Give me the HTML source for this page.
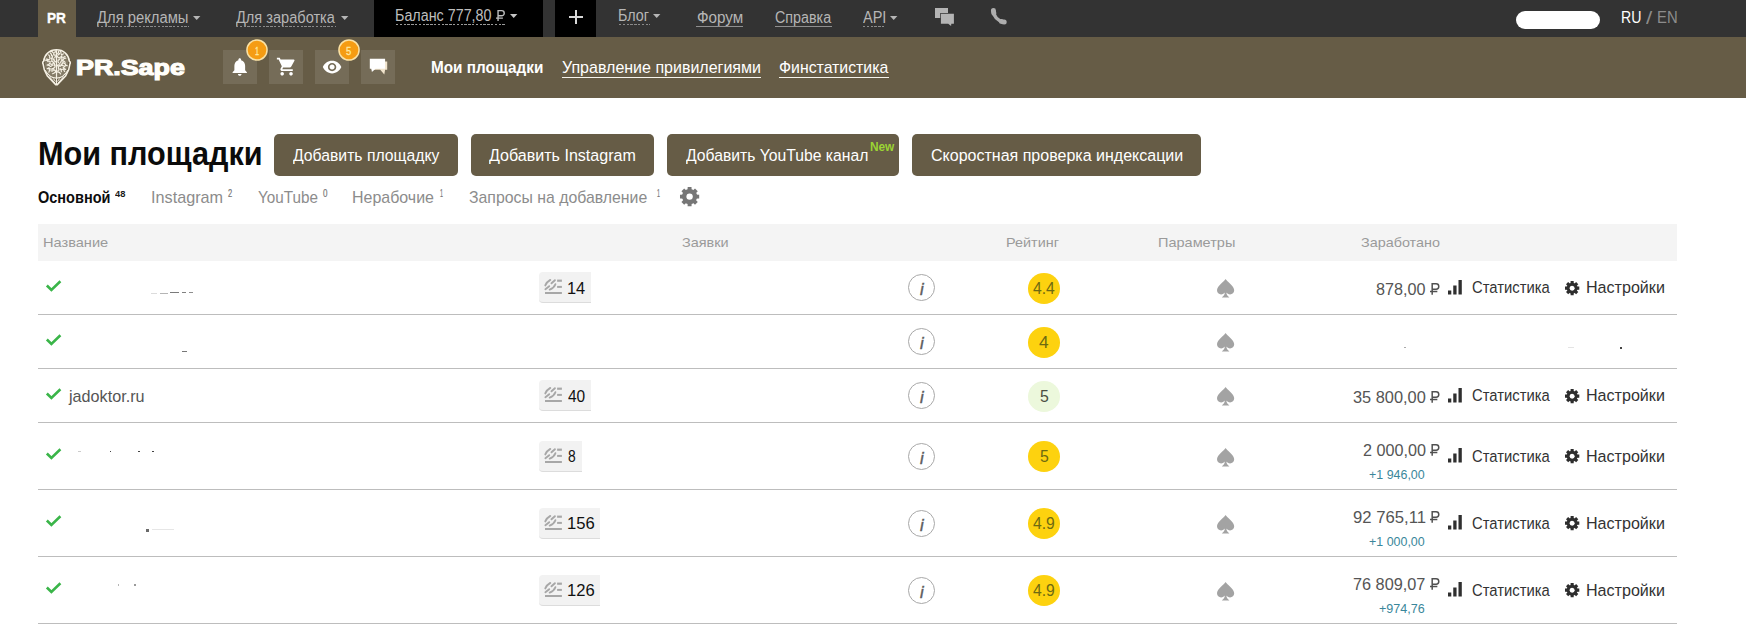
<!DOCTYPE html>
<html lang="ru"><head><meta charset="utf-8"><title>PR.Sape — Мои площадки</title>
<style>
html,body{margin:0;padding:0;background:#fff}
body{width:1746px;height:626px;position:relative;overflow:hidden;font-family:'Liberation Sans',sans-serif;}
#p{position:absolute;left:0;top:0;width:1746px;height:626px;overflow:hidden;background:#fff}
#p header,#p nav,#p main,#p section{display:contents}
#p div,#p svg,#p span{position:absolute;display:block;box-sizing:content-box}
#p svg{overflow:visible}
.t{white-space:nowrap;transform-origin:0 0;font-family:'Liberation Sans',sans-serif}
</style></head><body><div id="p">
<header class="topbar">
<div style="left:0px;top:0px;width:1746px;height:37px;background:#333333"></div>
<div style="left:38px;top:0px;width:38px;height:37px;background:#665c46"></div>
<span class="t" style="left:46.97px;top:6.90px;font-size:15.4px;line-height:21px;color:#fff;transform:scaleX(0.8877);font-weight:700;-webkit-text-stroke:0.35px #fff;">PR</span>
<span class="t" style="left:97.20px;top:6.95px;font-size:15.8px;line-height:21px;color:#b6b6b6;transform:scaleX(0.9355);">Для рекламы</span>
<div style="left:97px;top:26px;width:92px;height:1px;background:repeating-linear-gradient(90deg,#8a8a8a 0,#8a8a8a 2.4px,transparent 2.4px,transparent 3.8px)"></div>
<svg style="left:193.1px;top:16px;" width="7.4" height="4" viewBox="0 0 7.4 4"><path d="M0 0h7.4L3.7 4z" fill="#b6b6b6"/></svg>
<span class="t" style="left:236.00px;top:6.95px;font-size:15.8px;line-height:21px;color:#b6b6b6;transform:scaleX(0.9224);">Для заработка</span>
<div style="left:236px;top:26px;width:99.5px;height:1px;background:repeating-linear-gradient(90deg,#8a8a8a 0,#8a8a8a 2.4px,transparent 2.4px,transparent 3.8px)"></div>
<svg style="left:340.7px;top:16px;" width="7.4" height="4" viewBox="0 0 7.4 4"><path d="M0 0h7.4L3.7 4z" fill="#b6b6b6"/></svg>
<div style="left:374px;top:0px;width:169px;height:37px;background:#000"></div>
<span class="t" style="left:395.49px;top:4.90px;font-size:15.8px;line-height:21px;color:#bebebe;transform:scaleX(0.9064);">Баланс 777,80</span>
<div style="left:395.5px;top:24px;width:109.5px;height:1px;background:repeating-linear-gradient(90deg,#999 0,#999 2.4px,transparent 2.4px,transparent 3.8px)"></div>
<svg style="left:510px;top:13.9px;" width="7.4" height="4" viewBox="0 0 7.4 4"><path d="M0 0h7.4L3.7 4z" fill="#c4c4c4"/></svg>
<svg style="left:496.2px;top:9.9px;" width="9.14" height="11.0" viewBox="0 0 9.8 11.8"><path d="M2.200 11.800V.7h3.900a2.750 2.750 0 0 1 0 5.500H2.200M0 8.700h7.400" fill="none" stroke="#bebebe" stroke-width="1.502"/></svg>
<div style="left:555px;top:0px;width:41px;height:37px;background:#000"></div>
<div style="left:569.2px;top:16.2px;width:13.8px;height:2px;background:#d8d8d8"></div>
<div style="left:575.2px;top:10.3px;width:2px;height:13.9px;background:#d8d8d8"></div>
<span class="t" style="left:618.19px;top:4.90px;font-size:15.8px;line-height:21px;color:#b6b6b6;transform:scaleX(0.9050);">Блог</span>
<div style="left:618.5px;top:24px;width:31.0px;height:1px;background:repeating-linear-gradient(90deg,#8a8a8a 0,#8a8a8a 2.4px,transparent 2.4px,transparent 3.8px)"></div>
<svg style="left:653.4px;top:14.2px;" width="7.4" height="4" viewBox="0 0 7.4 4"><path d="M0 0h7.4L3.7 4z" fill="#b6b6b6"/></svg>
<span class="t" style="left:697.00px;top:6.80px;font-size:15.8px;line-height:21px;color:#b6b6b6;transform:scaleX(0.9634);">Форум</span>
<div style="left:696.3px;top:26px;width:46.80000000000007px;height:1px;background:#8f8f8f"></div>
<span class="t" style="left:775.20px;top:6.85px;font-size:15.8px;line-height:21px;color:#b6b6b6;transform:scaleX(0.9054);">Справка</span>
<div style="left:775px;top:26px;width:57px;height:1px;background:#8f8f8f"></div>
<span class="t" style="left:863.40px;top:6.85px;font-size:15.8px;line-height:21px;color:#b6b6b6;transform:scaleX(0.9180);">API</span>
<div style="left:863px;top:26px;width:22.799999999999955px;height:1px;background:repeating-linear-gradient(90deg,#8a8a8a 0,#8a8a8a 2.4px,transparent 2.4px,transparent 3.8px)"></div>
<svg style="left:890px;top:16.2px;" width="7.4" height="4" viewBox="0 0 7.4 4"><path d="M0 0h7.4L3.7 4z" fill="#b6b6b6"/></svg>
<svg style="left:935px;top:8px;" width="19" height="18.5" viewBox="0 0 19 18.5"><rect x="0" y="0" width="13" height="10" fill="#b4b4b4"/><path d="M5.2 5h14.3v11.5h-2.6l-.4 2.6-3.2-2.6H5.2z" fill="#333"/><path d="M5.9 5.7h13v10h-2.6l-.2 2.4-2.9-2.4H5.9z" fill="#b4b4b4"/></svg>
<svg style="left:990px;top:8px;" width="18" height="18" viewBox="0 0 18 18"><g fill="none" stroke="#adadad" stroke-linecap="round"><path d="M3.500 2.600Q4.200 12.300 14 14" stroke-width="3.300"/><path d="M3.450 2.500Q3.500 4 3.800 5.200" stroke-width="5"/><path d="M11.600 13.500Q13 14 14.200 14" stroke-width="5"/></g></svg>
<div style="left:1516.2px;top:11.2px;width:83.6px;height:17.5px;background:#fff;border-radius:9px"></div>
<span class="t" style="left:1621.31px;top:6.60px;font-size:15.9px;line-height:21px;color:#fff;transform:scaleX(0.8894);">RU</span>
<span class="t" style="left:1645.80px;top:5.60px;font-size:18.2px;line-height:24px;color:#8c8c8c;transform:scaleX(1.2333);">/</span>
<span class="t" style="left:1656.57px;top:6.60px;font-size:15.9px;line-height:21px;color:#8c8c8c;transform:scaleX(0.9321);">EN</span>
</header>
<nav class="brandbar">
<div style="left:0px;top:37px;width:1746px;height:60.5px;background:#665c46"></div>
<svg style="left:42px;top:48.5px;" width="29" height="36.5" viewBox="0 0 29 36.5"><g fill="none" stroke="#f6f1e4" stroke-linecap="round" stroke-linejoin="round"><path stroke-width="1.55" d="M14.5 .8C21.6 .8 26.7 5.7 27.3 12.200c1 .3 1.300 1.700.6 2.800-.3 4.600-2 8.500-4.300 12L15.300 35.600h-1.600L5.400 27C3.100 23.500 1.400 19.600 1.100 15c-.7-1.100-.4-2.500.6-2.800C2.300 5.700 7.400.8 14.500.8z"/><path stroke-width="1.2" d="M14.500 1.500v27.500M3.200 21.500c3.200 5.200 7 7.600 11.300 7.600s8.100-2.400 11.300-7.600"/><path stroke-width="1" d="M14.500 29.500v5.500M7.500 27.800l5.500 6.200M21.500 27.800l-5.500 6.200M11.500 29.800l1.800 2.400M17.500 29.800l-1.800 2.400"/><path stroke-width="1.2" d="M12.84 3.72Q13.67 2.79 13.17 1.65M10.84 3.34Q10.00 2.14 8.54 2.15M15.64 4.72Q16.73 3.63 16.64 2.09M18.93 4.26Q19.25 2.75 18.01 1.84M12.01 6.12Q11.37 5.05 11.77 3.87M9.61 6.76Q9.84 4.96 8.35 3.94M16.16 5.86Q17.28 5.44 17.54 4.26M19.28 5.39Q20.47 5.79 21.40 4.93M12.72 8.81Q13.91 7.41 13.09 5.76M10.16 8.74Q10.70 7.73 10.28 6.65M7.63 8.67Q8.30 6.90 6.67 5.93M16.86 8.89Q15.52 8.26 15.21 6.82M17.82 8.30Q19.47 8.32 19.83 6.71M19.98 8.02Q21.74 8.96 23.08 7.47M12.42 11.13Q11.29 10.54 10.99 9.30M10.08 11.05Q9.90 9.78 8.87 9.02M7.92 9.84Q6.36 11.20 4.72 9.94M16.24 11.44Q17.80 11.03 18.20 9.47M19.77 10.80Q20.22 9.60 19.55 8.52M20.93 11.02Q21.71 9.17 23.72 9.20M13.76 12.91Q12.36 12.62 11.90 11.26M11.31 13.53Q10.65 12.35 9.32 12.13M8.25 13.09Q7.65 11.74 6.21 12.06M6.10 12.69Q5.13 10.78 3.04 11.26M16.40 13.65Q15.48 12.30 16.29 10.89M18.80 13.70Q18.63 12.36 19.73 11.56M20.34 11.94Q22.16 11.74 23.15 13.27M12.30 16.29Q13.03 14.23 11.15 13.11M11.01 14.68Q9.71 15.84 8.34 14.77M7.65 14.16Q7.15 15.97 5.28 15.88M15.62 16.02Q17.65 15.99 17.99 14.00M18.96 15.70Q20.59 14.83 21.07 13.05M21.74 14.05Q23.37 14.44 23.87 16.04M13.06 15.82Q13.43 17.47 12.38 18.79M10.90 16.25Q9.50 16.22 8.92 17.50M8.14 17.25Q6.99 15.63 5.07 16.16M15.00 17.08Q16.08 15.73 17.65 16.46M17.98 17.45Q18.94 16.19 20.52 16.12M21.01 16.49Q22.29 16.60 22.70 17.81M23.21 16.75Q24.22 15.93 25.25 16.73M12.84 18.28Q11.22 18.90 11.02 20.63M10.89 19.62Q9.12 20.80 7.60 19.32M7.08 18.64Q6.38 19.60 5.20 19.58M16.63 17.47Q15.75 19.29 17.14 20.75M18.19 19.67Q19.72 20.84 21.50 20.07M21.11 18.03Q21.66 19.93 23.58 20.37M12.20 20.87Q13.69 21.51 13.82 23.13M11.16 21.54Q10.15 22.48 9.01 21.70M7.20 20.05Q7.87 21.67 6.90 23.13M16.93 20.84Q15.59 21.56 15.69 23.08M18.47 20.18Q19.46 21.20 19.35 22.62M22.01 20.43Q21.57 21.69 22.68 22.42M12.97 23.40Q12.00 24.63 10.44 24.75M15.98 22.92Q17.97 23.04 18.59 24.95"/></g><ellipse cx="14.500" cy="14.800" rx="11.700" ry="13.300" fill="#f6f1e4" opacity=".22"/></svg>
<span class="t" style="left:76.08px;top:53.40px;font-size:21.9px;line-height:29px;color:#fffefa;transform:scaleX(1.2254);font-weight:700;-webkit-text-stroke:1.15px #fffefa;">PR.Sape</span>
<div style="left:223px;top:50px;width:34px;height:34px;background:rgba(255,255,255,.1)"></div>
<svg style="left:229.25px;top:56.25px;" width="21.5" height="21.5" viewBox="0 0 24 24"><path d="M12 22c1.100 0 2-.9 2-2h-4c0 1.100.89 2 2 2zm6-6v-5c0-3.070-1.640-5.640-4.500-6.320V4c0-.83-.67-1.500-1.500-1.500s-1.500.67-1.500 1.500v.68C7.630 5.360 6 7.920 6 11v5l-2 2v1h16v-1l-2-2z" fill="#fff"/></svg>
<div style="left:269px;top:50px;width:34px;height:34px;background:rgba(255,255,255,.1)"></div>
<svg style="left:276.09999999999997px;top:56.199999999999996px;" width="21.2" height="21.2" viewBox="0 0 24 24"><path d="M7 18c-1.100 0-1.990.9-1.990 2S5.900 22 7 22s2-.9 2-2-.9-2-2-2zM1 2v2h2l3.600 7.590-1.350 2.450c-.16.28-.25.61-.25.96 0 1.100.9 2 2 2h12v-2H7.420c-.14 0-.25-.11-.25-.25l.03-.12.9-1.630h7.450c.75 0 1.410-.41 1.750-1.030l3.580-6.490c.08-.14.12-.31.12-.48 0-.55-.45-1-1-1H5.210l-.94-2H1zm16 16c-1.100 0-1.990.9-1.990 2s.89 2 1.990 2 2-.9 2-2-.9-2-2-2z" fill="#fff"/></svg>
<div style="left:315px;top:50px;width:34px;height:34px;background:rgba(255,255,255,.1)"></div>
<svg style="left:321.9px;top:56.49999999999999px;" width="20.2" height="20.2" viewBox="0 0 24 24"><path d="M12 4.500C7 4.500 2.730 7.610 1 12c1.730 4.390 6 7.500 11 7.500s9.270-3.110 11-7.500c-1.730-4.390-6-7.500-11-7.500zM12 17c-2.760 0-5-2.240-5-5s2.240-5 5-5 5 2.240 5 5-2.240 5-5 5zm0-8c-1.660 0-3 1.340-3 3s1.340 3 3 3 3-1.340 3-3-1.340-3-3-3z" fill="#fff"/></svg>
<div style="left:361px;top:50px;width:34px;height:34px;background:rgba(255,255,255,.1)"></div>
<svg style="left:369px;top:58px;" width="19" height="17" viewBox="0 0 19 17"><path d="M2.600 3.400h15.600v8.300h-2.100l-.8 4.900-4.100-4.900H2.600z" fill="#f1e4cc"/><path d="M.8 .8h15.300v10H6.600l-3.700 3.100-.5-3.100H.8z" fill="#fff"/></svg>
<svg style="left:245px;top:38.4px;" width="24" height="24" viewBox="-12 -12 24 24"><circle r="10.050" fill="#f59c13" stroke="#fbe2a4" stroke-width="1.500"/></svg>
<svg style="left:337px;top:38.4px;" width="24" height="24" viewBox="-12 -12 24 24"><circle r="10.050" fill="#f59c13" stroke="#fbe2a4" stroke-width="1.500"/></svg>
<span class="t" style="left:254.60px;top:44.80px;font-size:10.4px;line-height:14px;color:#ffeaa0;transform:scaleX(0.6984);-webkit-text-stroke:0.3px #ffeaa0;">1</span>
<span class="t" style="left:346.24px;top:44.80px;font-size:10.4px;line-height:14px;color:#ffeaa0;transform:scaleX(0.9048);-webkit-text-stroke:0.3px #ffeaa0;">5</span>
<span class="t" style="left:431.20px;top:56.00px;font-size:17.0px;line-height:23px;color:#fff;transform:scaleX(0.9006);font-weight:700;">Мои площадки</span>
<span class="t" style="left:562.20px;top:56.10px;font-size:17.0px;line-height:23px;color:#fff;transform:scaleX(0.9413);">Управление привилегиями</span>
<div style="left:562px;top:77px;width:199px;height:1px;background:#f6f4ec"></div>
<span class="t" style="left:779.20px;top:56.10px;font-size:17.0px;line-height:23px;color:#fff;transform:scaleX(0.9316);">Финстатистика</span>
<div style="left:779px;top:77px;width:110.29999999999995px;height:1px;background:#f6f4ec"></div>
</nav>
<main>
<section class="heading">
<span class="t" style="left:37.94px;top:132.40px;font-size:32.9px;line-height:43px;color:#0b0b0b;transform:scaleX(0.9310);font-weight:700;">Мои площадки</span>
<div style="left:274px;top:134px;width:184px;height:42px;background:#665c46;border-radius:5px"></div>
<span class="t" style="left:292.70px;top:144.00px;font-size:17.4px;line-height:23px;color:#fff;transform:scaleX(0.9047);">Добавить площадку</span>
<div style="left:471px;top:134px;width:183px;height:42px;background:#665c46;border-radius:5px"></div>
<span class="t" style="left:489.30px;top:144.00px;font-size:17.4px;line-height:23px;color:#fff;transform:scaleX(0.9235);">Добавить Instagram</span>
<div style="left:667px;top:134px;width:232px;height:42px;background:#665c46;border-radius:5px"></div>
<span class="t" style="left:685.70px;top:144.00px;font-size:17.4px;line-height:23px;color:#fff;transform:scaleX(0.9029);">Добавить YouTube канал</span>
<div style="left:912px;top:134px;width:289px;height:42px;background:#665c46;border-radius:5px"></div>
<span class="t" style="left:930.70px;top:144.00px;font-size:17.4px;line-height:23px;color:#fff;transform:scaleX(0.9210);">Скоростная проверка индексации</span>
<span class="t" style="left:870.00px;top:137.90px;font-size:13px;line-height:17px;color:#9bd433;transform:scaleX(0.9088);font-weight:700;">New</span>
<span class="t" style="left:38.30px;top:186.50px;font-size:16.0px;line-height:21px;color:#0d0d0d;transform:scaleX(0.9070);font-weight:700;">Основной</span>
<span class="t" style="left:115.00px;top:186.80px;font-size:9.6px;line-height:13px;color:#1a1a1a;transform:scaleX(0.9704);font-weight:700;">48</span>
<span class="t" style="left:151.09px;top:186.55px;font-size:16.1px;line-height:21px;color:#8c8c8c;transform:scaleX(1.0078);">Instagram</span>
<span class="t" style="left:228.07px;top:186.90px;font-size:10.4px;line-height:14px;color:#767676;transform:scaleX(0.7258);-webkit-text-stroke:0.2px #767676;">2</span>
<span class="t" style="left:257.70px;top:186.55px;font-size:16.1px;line-height:21px;color:#8c8c8c;transform:scaleX(0.9480);">YouTube</span>
<span class="t" style="left:322.88px;top:186.90px;font-size:10.4px;line-height:14px;color:#767676;transform:scaleX(0.7742);-webkit-text-stroke:0.2px #767676;">0</span>
<span class="t" style="left:352.31px;top:186.55px;font-size:16.1px;line-height:21px;color:#8c8c8c;transform:scaleX(0.9919);">Нерабочие</span>
<span class="t" style="left:439.65px;top:186.90px;font-size:10.4px;line-height:14px;color:#767676;transform:scaleX(0.5161);-webkit-text-stroke:0.2px #767676;">1</span>
<span class="t" style="left:469.00px;top:186.55px;font-size:16.1px;line-height:21px;color:#8c8c8c;transform:scaleX(0.9839);">Запросы на добавление</span>
<span class="t" style="left:657.05px;top:186.90px;font-size:10.4px;line-height:14px;color:#767676;transform:scaleX(0.5161);-webkit-text-stroke:0.2px #767676;">1</span>
<svg style="left:679.2px;top:186.4px;" width="21.2" height="21.2" viewBox="-10.6 -10.6 21.2 21.2"><g fill="#767676"><path transform="rotate(0)" d="M-2.250 0L-1.935 -9.600H1.935L2.250 0L1.935 9.600H-1.935z"/><path transform="rotate(45)" d="M-2.250 0L-1.935 -9.600H1.935L2.250 0L1.935 9.600H-1.935z"/><path transform="rotate(90)" d="M-2.250 0L-1.935 -9.600H1.935L2.250 0L1.935 9.600H-1.935z"/><path transform="rotate(135)" d="M-2.250 0L-1.935 -9.600H1.935L2.250 0L1.935 9.600H-1.935z"/><circle r="7.600"/></g><circle r="3.200" fill="#fff"/></svg>
</section>
<section class="sites-table">
<div style="left:38px;top:224px;width:1639px;height:37px;background:#f4f4f4"></div>
<span class="t" style="left:43.19px;top:234.20px;font-size:13.2px;line-height:18px;color:#9a9a9a;transform:scaleX(1.1060);">Название</span>
<span class="t" style="left:682.00px;top:234.20px;font-size:13.2px;line-height:18px;color:#9a9a9a;transform:scaleX(1.0967);">Заявки</span>
<span class="t" style="left:1006.21px;top:234.20px;font-size:13.2px;line-height:18px;color:#9a9a9a;transform:scaleX(1.0923);">Рейтинг</span>
<span class="t" style="left:1158.20px;top:234.20px;font-size:13.2px;line-height:18px;color:#9a9a9a;transform:scaleX(1.1000);">Параметры</span>
<span class="t" style="left:1360.70px;top:234.20px;font-size:13.2px;line-height:18px;color:#9a9a9a;transform:scaleX(1.0905);">Заработано</span>
<div style="left:38px;top:314px;width:1639px;height:1px;background:#bdbdbd"></div>
<svg style="left:44px;top:275.5px;" width="19" height="18" viewBox="0 0 19 18"><path d="M2.860 9.450L7.400 13.900L16.400 5.300" fill="none" stroke="#3ab549" stroke-width="2.600"/></svg>
<div style="left:539px;top:272.0px;width:52px;height:30px;background:#f2f2f2;border-bottom:1px solid #dcdcdc;border-radius:4px 0 0 4px"></div>
<svg style="left:540px;top:274.0px;" width="28" height="24" viewBox="0 0 28 24"><g stroke="#a7a7a7" fill="none"><path d="M5.300 11.400C6.200 9.200 8.200 7.100 10.300 5.900M11.500 9.300L14.900 6.200M5.400 15.200L9.200 12.200M9.700 15.600C12 14.700 14.600 12.400 15.400 10.200" stroke-width="1.900" stroke-linecap="round"/><path d="M17.100 6.700h4.800" stroke-width="2.200"/><path d="M17.100 12.900h4.800" stroke-width="2"/><path d="M5 19h16.900" stroke-width="2"/></g></svg>
<span class="t" style="left:566.59px;top:276.90px;font-size:16.2px;line-height:22px;color:#111;transform:scaleX(1.0116);">14</span>
<div style="left:908px;top:274.0px;width:25px;height:25px;border:1px solid #a8a8a8;border-radius:50%;background:#fff"></div>
<span class="t" style="left:919.61px;top:278.00px;font-size:17.2px;line-height:23px;color:#5c5c5c;transform:scaleX(0.9541);font-style:italic;-webkit-text-stroke:0.45px #5c5c5c;">i</span>
<div style="left:1027.9px;top:272.7px;width:32.3px;height:30.9px;background:#fdd20f;border-radius:50%"></div>
<span class="t" style="left:1033.00px;top:276.80px;font-size:16.2px;line-height:22px;color:#6d6a12;transform:scaleX(0.9689);">4.4</span>
<svg style="left:1217.4px;top:279.4px;" width="17.2" height="18.4" viewBox="0 0 17.2 18.4"><path d="M8.6 0C7.2 2.600 0 7 0 11.300c0 2.400 1.900 4.100 4.100 4.100 1.600 0 2.900-.8 3.700-1.900-.1 2-1.100 3.600-3 4.900h7.600c-1.900-1.300-2.900-2.900-3-4.900.8 1.100 2.100 1.900 3.700 1.900 2.200 0 4.100-1.700 4.100-4.100C17.200 7 10 2.600 8.600 0z" fill="#a3a3a3"/></svg>
<span class="t" style="left:1376.10px;top:277.80px;font-size:16.2px;line-height:22px;color:#555;transform:scaleX(0.9998);">878,00</span>
<svg style="left:1430.2px;top:282.5px;" width="9.72" height="11.7" viewBox="0 0 9.8 11.8"><path d="M2.200 11.800V.7h3.900a2.750 2.750 0 0 1 0 5.500H2.200M0 8.700h7.400" fill="none" stroke="#505050" stroke-width="1.513"/></svg>
<svg style="left:1448.2px;top:279.5px;" width="13.8" height="14.5" viewBox="0 0 13.800 14.500"><path d="M0 10.400h3.300v4.100H0zM5.250 5.400h3.300v9.100h-3.300zM10.500 0h3.300v14.500h-3.300z" fill="#2f2f2f"/></svg>
<span class="t" style="left:1472.00px;top:276.00px;font-size:16.3px;line-height:22px;color:#333;transform:scaleX(0.9092);">Статистика</span>
<svg style="left:1563.85px;top:279.6px;" width="16.3" height="16.3" viewBox="-8.15 -8.15 16.3 16.3"><g fill="#2e2e2e"><path transform="rotate(0)" d="M-1.800 0L-1.530 -7.150H1.530L1.800 0L1.530 7.150H-1.530z"/><path transform="rotate(45)" d="M-1.800 0L-1.530 -7.150H1.530L1.800 0L1.530 7.150H-1.530z"/><path transform="rotate(90)" d="M-1.800 0L-1.530 -7.150H1.530L1.800 0L1.530 7.150H-1.530z"/><path transform="rotate(135)" d="M-1.800 0L-1.530 -7.150H1.530L1.800 0L1.530 7.150H-1.530z"/><circle r="5.400"/></g><circle r="2.500" fill="#fff"/></svg>
<span class="t" style="left:1586.21px;top:276.00px;font-size:16.3px;line-height:22px;color:#333;transform:scaleX(0.9879);">Настройки</span>
<div style="left:38px;top:368px;width:1639px;height:1px;background:#bdbdbd"></div>
<svg style="left:44px;top:329.5px;" width="19" height="18" viewBox="0 0 19 18"><path d="M2.860 9.450L7.400 13.900L16.400 5.300" fill="none" stroke="#3ab549" stroke-width="2.600"/></svg>
<div style="left:908px;top:328.0px;width:25px;height:25px;border:1px solid #a8a8a8;border-radius:50%;background:#fff"></div>
<span class="t" style="left:919.61px;top:332.00px;font-size:17.2px;line-height:23px;color:#5c5c5c;transform:scaleX(0.9541);font-style:italic;-webkit-text-stroke:0.45px #5c5c5c;">i</span>
<div style="left:1027.9px;top:326.7px;width:32.3px;height:30.9px;background:#fdd20f;border-radius:50%"></div>
<span class="t" style="left:1039.20px;top:330.80px;font-size:16.2px;line-height:22px;color:#6d6a12;transform:scaleX(1.0667);">4</span>
<svg style="left:1217.4px;top:333.4px;" width="17.2" height="18.4" viewBox="0 0 17.2 18.4"><path d="M8.6 0C7.2 2.600 0 7 0 11.300c0 2.400 1.900 4.100 4.100 4.100 1.600 0 2.900-.8 3.700-1.900-.1 2-1.100 3.600-3 4.900h7.600c-1.900-1.300-2.900-2.900-3-4.900.8 1.100 2.100 1.900 3.700 1.900 2.200 0 4.100-1.700 4.100-4.100C17.200 7 10 2.600 8.600 0z" fill="#a3a3a3"/></svg>
<div style="left:38px;top:422px;width:1639px;height:1px;background:#bdbdbd"></div>
<svg style="left:44px;top:383.5px;" width="19" height="18" viewBox="0 0 19 18"><path d="M2.860 9.450L7.400 13.900L16.400 5.300" fill="none" stroke="#3ab549" stroke-width="2.600"/></svg>
<span class="t" style="left:68.98px;top:385.80px;font-size:16.6px;line-height:22px;color:#555;transform:scaleX(0.9750);">jadoktor.ru</span>
<div style="left:539px;top:380.0px;width:52px;height:30px;background:#f2f2f2;border-bottom:1px solid #dcdcdc;border-radius:4px 0 0 4px"></div>
<svg style="left:540px;top:382.0px;" width="28" height="24" viewBox="0 0 28 24"><g stroke="#a7a7a7" fill="none"><path d="M5.300 11.400C6.200 9.200 8.200 7.100 10.300 5.900M11.500 9.300L14.900 6.200M5.400 15.200L9.200 12.200M9.700 15.600C12 14.700 14.600 12.400 15.400 10.200" stroke-width="1.900" stroke-linecap="round"/><path d="M17.100 6.700h4.800" stroke-width="2.200"/><path d="M17.100 12.900h4.800" stroke-width="2"/><path d="M5 19h16.900" stroke-width="2"/></g></svg>
<span class="t" style="left:567.60px;top:384.90px;font-size:16.2px;line-height:22px;color:#111;transform:scaleX(0.9554);">40</span>
<div style="left:908px;top:382.0px;width:25px;height:25px;border:1px solid #a8a8a8;border-radius:50%;background:#fff"></div>
<span class="t" style="left:919.61px;top:386.00px;font-size:17.2px;line-height:23px;color:#5c5c5c;transform:scaleX(0.9541);font-style:italic;-webkit-text-stroke:0.45px #5c5c5c;">i</span>
<div style="left:1027.9px;top:380.7px;width:32.3px;height:30.9px;background:#ecf8dc;border-radius:50%"></div>
<span class="t" style="left:1039.60px;top:384.80px;font-size:16.2px;line-height:22px;color:#4a4f42;transform:scaleX(0.9778);">5</span>
<svg style="left:1217.4px;top:387.4px;" width="17.2" height="18.4" viewBox="0 0 17.2 18.4"><path d="M8.6 0C7.2 2.600 0 7 0 11.300c0 2.400 1.900 4.100 4.100 4.100 1.600 0 2.900-.8 3.700-1.900-.1 2-1.100 3.600-3 4.900h7.600c-1.900-1.300-2.900-2.900-3-4.900.8 1.100 2.100 1.900 3.700 1.900 2.200 0 4.100-1.700 4.100-4.100C17.200 7 10 2.600 8.600 0z" fill="#a3a3a3"/></svg>
<span class="t" style="left:1352.80px;top:385.80px;font-size:16.2px;line-height:22px;color:#555;transform:scaleX(1.0110);">35 800,00</span>
<svg style="left:1430.2px;top:390.5px;" width="9.72" height="11.7" viewBox="0 0 9.8 11.8"><path d="M2.200 11.800V.7h3.900a2.750 2.750 0 0 1 0 5.500H2.200M0 8.700h7.400" fill="none" stroke="#505050" stroke-width="1.513"/></svg>
<svg style="left:1448.2px;top:387.5px;" width="13.8" height="14.5" viewBox="0 0 13.800 14.500"><path d="M0 10.400h3.300v4.100H0zM5.250 5.400h3.300v9.100h-3.300zM10.500 0h3.300v14.500h-3.300z" fill="#2f2f2f"/></svg>
<span class="t" style="left:1472.00px;top:384.00px;font-size:16.3px;line-height:22px;color:#333;transform:scaleX(0.9092);">Статистика</span>
<svg style="left:1563.85px;top:387.6px;" width="16.3" height="16.3" viewBox="-8.15 -8.15 16.3 16.3"><g fill="#2e2e2e"><path transform="rotate(0)" d="M-1.800 0L-1.530 -7.150H1.530L1.800 0L1.530 7.150H-1.530z"/><path transform="rotate(45)" d="M-1.800 0L-1.530 -7.150H1.530L1.800 0L1.530 7.150H-1.530z"/><path transform="rotate(90)" d="M-1.800 0L-1.530 -7.150H1.530L1.800 0L1.530 7.150H-1.530z"/><path transform="rotate(135)" d="M-1.800 0L-1.530 -7.150H1.530L1.800 0L1.530 7.150H-1.530z"/><circle r="5.400"/></g><circle r="2.500" fill="#fff"/></svg>
<span class="t" style="left:1586.21px;top:384.00px;font-size:16.3px;line-height:22px;color:#333;transform:scaleX(0.9879);">Настройки</span>
<div style="left:38px;top:489px;width:1639px;height:1px;background:#bdbdbd"></div>
<svg style="left:44px;top:443.5px;" width="19" height="18" viewBox="0 0 19 18"><path d="M2.860 9.450L7.400 13.900L16.400 5.300" fill="none" stroke="#3ab549" stroke-width="2.600"/></svg>
<div style="left:539px;top:440.5px;width:42.7px;height:30px;background:#f2f2f2;border-bottom:1px solid #dcdcdc;border-radius:4px 0 0 4px"></div>
<svg style="left:540px;top:442.5px;" width="28" height="24" viewBox="0 0 28 24"><g stroke="#a7a7a7" fill="none"><path d="M5.300 11.400C6.200 9.200 8.200 7.100 10.300 5.900M11.500 9.300L14.900 6.200M5.400 15.200L9.200 12.200M9.700 15.600C12 14.700 14.600 12.400 15.400 10.200" stroke-width="1.900" stroke-linecap="round"/><path d="M17.100 6.700h4.800" stroke-width="2.200"/><path d="M17.100 12.900h4.800" stroke-width="2"/><path d="M5 19h16.900" stroke-width="2"/></g></svg>
<span class="t" style="left:567.60px;top:445.40px;font-size:16.2px;line-height:22px;color:#111;transform:scaleX(0.8556);">8</span>
<div style="left:908px;top:442.5px;width:25px;height:25px;border:1px solid #a8a8a8;border-radius:50%;background:#fff"></div>
<span class="t" style="left:919.61px;top:446.50px;font-size:17.2px;line-height:23px;color:#5c5c5c;transform:scaleX(0.9541);font-style:italic;-webkit-text-stroke:0.45px #5c5c5c;">i</span>
<div style="left:1027.9px;top:441.2px;width:32.3px;height:30.9px;background:#fdd20f;border-radius:50%"></div>
<span class="t" style="left:1039.60px;top:445.30px;font-size:16.2px;line-height:22px;color:#6d6a12;transform:scaleX(0.9778);">5</span>
<svg style="left:1217.4px;top:447.9px;" width="17.2" height="18.4" viewBox="0 0 17.2 18.4"><path d="M8.6 0C7.2 2.600 0 7 0 11.300c0 2.400 1.900 4.100 4.100 4.100 1.600 0 2.900-.8 3.700-1.900-.1 2-1.100 3.600-3 4.900h7.600c-1.900-1.300-2.900-2.900-3-4.900.8 1.100 2.100 1.900 3.700 1.900 2.200 0 4.100-1.700 4.100-4.100C17.200 7 10 2.600 8.600 0z" fill="#a3a3a3"/></svg>
<span class="t" style="left:1362.60px;top:439.45px;font-size:16.2px;line-height:22px;color:#555;transform:scaleX(0.9999);">2 000,00</span>
<svg style="left:1430.2px;top:444.15px;" width="9.72" height="11.7" viewBox="0 0 9.8 11.8"><path d="M2.200 11.800V.7h3.900a2.750 2.750 0 0 1 0 5.500H2.200M0 8.700h7.400" fill="none" stroke="#505050" stroke-width="1.513"/></svg>
<span class="t" style="left:1369.20px;top:466.10px;font-size:12.8px;line-height:17px;color:#3a879b;transform:scaleX(0.9726);">+1 946,00</span>
<svg style="left:1448.2px;top:448.0px;" width="13.8" height="14.5" viewBox="0 0 13.800 14.500"><path d="M0 10.400h3.300v4.100H0zM5.250 5.400h3.300v9.100h-3.300zM10.500 0h3.300v14.500h-3.300z" fill="#2f2f2f"/></svg>
<span class="t" style="left:1472.00px;top:444.50px;font-size:16.3px;line-height:22px;color:#333;transform:scaleX(0.9092);">Статистика</span>
<svg style="left:1563.85px;top:448.1px;" width="16.3" height="16.3" viewBox="-8.15 -8.15 16.3 16.3"><g fill="#2e2e2e"><path transform="rotate(0)" d="M-1.800 0L-1.530 -7.150H1.530L1.800 0L1.530 7.150H-1.530z"/><path transform="rotate(45)" d="M-1.800 0L-1.530 -7.150H1.530L1.800 0L1.530 7.150H-1.530z"/><path transform="rotate(90)" d="M-1.800 0L-1.530 -7.150H1.530L1.800 0L1.530 7.150H-1.530z"/><path transform="rotate(135)" d="M-1.800 0L-1.530 -7.150H1.530L1.800 0L1.530 7.150H-1.530z"/><circle r="5.400"/></g><circle r="2.500" fill="#fff"/></svg>
<span class="t" style="left:1586.21px;top:444.50px;font-size:16.3px;line-height:22px;color:#333;transform:scaleX(0.9879);">Настройки</span>
<div style="left:38px;top:556px;width:1639px;height:1px;background:#bdbdbd"></div>
<svg style="left:44px;top:510.5px;" width="19" height="18" viewBox="0 0 19 18"><path d="M2.860 9.450L7.400 13.900L16.400 5.300" fill="none" stroke="#3ab549" stroke-width="2.600"/></svg>
<div style="left:539px;top:507.5px;width:61px;height:30px;background:#f2f2f2;border-bottom:1px solid #dcdcdc;border-radius:4px 0 0 4px"></div>
<svg style="left:540px;top:509.5px;" width="28" height="24" viewBox="0 0 28 24"><g stroke="#a7a7a7" fill="none"><path d="M5.300 11.400C6.200 9.200 8.200 7.100 10.300 5.900M11.500 9.300L14.900 6.200M5.400 15.200L9.200 12.200M9.700 15.600C12 14.700 14.600 12.400 15.400 10.200" stroke-width="1.900" stroke-linecap="round"/><path d="M17.100 6.700h4.800" stroke-width="2.200"/><path d="M17.100 12.900h4.800" stroke-width="2"/><path d="M5 19h16.900" stroke-width="2"/></g></svg>
<span class="t" style="left:566.57px;top:512.40px;font-size:16.2px;line-height:22px;color:#111;transform:scaleX(1.0267);">156</span>
<div style="left:908px;top:509.5px;width:25px;height:25px;border:1px solid #a8a8a8;border-radius:50%;background:#fff"></div>
<span class="t" style="left:919.61px;top:513.50px;font-size:17.2px;line-height:23px;color:#5c5c5c;transform:scaleX(0.9541);font-style:italic;-webkit-text-stroke:0.45px #5c5c5c;">i</span>
<div style="left:1027.9px;top:508.2px;width:32.3px;height:30.9px;background:#fdd20f;border-radius:50%"></div>
<span class="t" style="left:1033.00px;top:512.30px;font-size:16.2px;line-height:22px;color:#6d6a12;transform:scaleX(0.9689);">4.9</span>
<svg style="left:1217.4px;top:514.9px;" width="17.2" height="18.4" viewBox="0 0 17.2 18.4"><path d="M8.6 0C7.2 2.600 0 7 0 11.300c0 2.400 1.900 4.100 4.100 4.100 1.600 0 2.900-.8 3.700-1.900-.1 2-1.100 3.600-3 4.900h7.600c-1.900-1.300-2.900-2.900-3-4.900.8 1.100 2.100 1.900 3.700 1.900 2.200 0 4.100-1.700 4.100-4.100C17.200 7 10 2.600 8.600 0z" fill="#a3a3a3"/></svg>
<span class="t" style="left:1352.60px;top:506.45px;font-size:16.2px;line-height:22px;color:#555;transform:scaleX(1.0309);">92 765,11</span>
<svg style="left:1430.2px;top:511.15px;" width="9.72" height="11.7" viewBox="0 0 9.8 11.8"><path d="M2.200 11.800V.7h3.900a2.750 2.750 0 0 1 0 5.500H2.200M0 8.700h7.400" fill="none" stroke="#505050" stroke-width="1.513"/></svg>
<span class="t" style="left:1369.20px;top:533.10px;font-size:12.8px;line-height:17px;color:#3a879b;transform:scaleX(0.9726);">+1 000,00</span>
<svg style="left:1448.2px;top:515.0px;" width="13.8" height="14.5" viewBox="0 0 13.800 14.500"><path d="M0 10.400h3.300v4.100H0zM5.250 5.400h3.300v9.100h-3.300zM10.500 0h3.300v14.500h-3.300z" fill="#2f2f2f"/></svg>
<span class="t" style="left:1472.00px;top:511.50px;font-size:16.3px;line-height:22px;color:#333;transform:scaleX(0.9092);">Статистика</span>
<svg style="left:1563.85px;top:515.1px;" width="16.3" height="16.3" viewBox="-8.15 -8.15 16.3 16.3"><g fill="#2e2e2e"><path transform="rotate(0)" d="M-1.800 0L-1.530 -7.150H1.530L1.800 0L1.530 7.150H-1.530z"/><path transform="rotate(45)" d="M-1.800 0L-1.530 -7.150H1.530L1.800 0L1.530 7.150H-1.530z"/><path transform="rotate(90)" d="M-1.800 0L-1.530 -7.150H1.530L1.800 0L1.530 7.150H-1.530z"/><path transform="rotate(135)" d="M-1.800 0L-1.530 -7.150H1.530L1.800 0L1.530 7.150H-1.530z"/><circle r="5.400"/></g><circle r="2.500" fill="#fff"/></svg>
<span class="t" style="left:1586.21px;top:511.50px;font-size:16.3px;line-height:22px;color:#333;transform:scaleX(0.9879);">Настройки</span>
<div style="left:38px;top:623px;width:1639px;height:1px;background:#bdbdbd"></div>
<svg style="left:44px;top:577.5px;" width="19" height="18" viewBox="0 0 19 18"><path d="M2.860 9.450L7.400 13.900L16.400 5.300" fill="none" stroke="#3ab549" stroke-width="2.600"/></svg>
<div style="left:539px;top:574.5px;width:61px;height:30px;background:#f2f2f2;border-bottom:1px solid #dcdcdc;border-radius:4px 0 0 4px"></div>
<svg style="left:540px;top:576.5px;" width="28" height="24" viewBox="0 0 28 24"><g stroke="#a7a7a7" fill="none"><path d="M5.300 11.400C6.200 9.200 8.200 7.100 10.300 5.900M11.500 9.300L14.900 6.200M5.400 15.200L9.200 12.200M9.700 15.600C12 14.700 14.600 12.400 15.400 10.200" stroke-width="1.900" stroke-linecap="round"/><path d="M17.100 6.700h4.800" stroke-width="2.200"/><path d="M17.100 12.900h4.800" stroke-width="2"/><path d="M5 19h16.900" stroke-width="2"/></g></svg>
<span class="t" style="left:566.57px;top:579.40px;font-size:16.2px;line-height:22px;color:#111;transform:scaleX(1.0267);">126</span>
<div style="left:908px;top:576.5px;width:25px;height:25px;border:1px solid #a8a8a8;border-radius:50%;background:#fff"></div>
<span class="t" style="left:919.61px;top:580.50px;font-size:17.2px;line-height:23px;color:#5c5c5c;transform:scaleX(0.9541);font-style:italic;-webkit-text-stroke:0.45px #5c5c5c;">i</span>
<div style="left:1027.9px;top:575.2px;width:32.3px;height:30.9px;background:#fdd20f;border-radius:50%"></div>
<span class="t" style="left:1033.00px;top:579.30px;font-size:16.2px;line-height:22px;color:#6d6a12;transform:scaleX(0.9689);">4.9</span>
<svg style="left:1217.4px;top:581.9px;" width="17.2" height="18.4" viewBox="0 0 17.2 18.4"><path d="M8.6 0C7.2 2.600 0 7 0 11.300c0 2.400 1.900 4.100 4.100 4.100 1.600 0 2.900-.8 3.700-1.900-.1 2-1.100 3.600-3 4.900h7.600c-1.900-1.300-2.900-2.900-3-4.900.8 1.100 2.100 1.900 3.700 1.900 2.200 0 4.100-1.700 4.100-4.100C17.200 7 10 2.600 8.600 0z" fill="#a3a3a3"/></svg>
<span class="t" style="left:1353.20px;top:573.45px;font-size:16.2px;line-height:22px;color:#555;transform:scaleX(1.0054);">76 809,07</span>
<svg style="left:1430.2px;top:578.15px;" width="9.72" height="11.7" viewBox="0 0 9.8 11.8"><path d="M2.200 11.800V.7h3.900a2.750 2.750 0 0 1 0 5.500H2.200M0 8.700h7.400" fill="none" stroke="#505050" stroke-width="1.513"/></svg>
<span class="t" style="left:1379.20px;top:600.10px;font-size:12.8px;line-height:17px;color:#3a879b;transform:scaleX(0.9807);">+974,76</span>
<svg style="left:1448.2px;top:582.0px;" width="13.8" height="14.5" viewBox="0 0 13.800 14.500"><path d="M0 10.400h3.300v4.100H0zM5.250 5.400h3.300v9.100h-3.300zM10.500 0h3.300v14.500h-3.300z" fill="#2f2f2f"/></svg>
<span class="t" style="left:1472.00px;top:578.50px;font-size:16.3px;line-height:22px;color:#333;transform:scaleX(0.9092);">Статистика</span>
<svg style="left:1563.85px;top:582.1px;" width="16.3" height="16.3" viewBox="-8.15 -8.15 16.3 16.3"><g fill="#2e2e2e"><path transform="rotate(0)" d="M-1.800 0L-1.530 -7.150H1.530L1.800 0L1.530 7.150H-1.530z"/><path transform="rotate(45)" d="M-1.800 0L-1.530 -7.150H1.530L1.800 0L1.530 7.150H-1.530z"/><path transform="rotate(90)" d="M-1.800 0L-1.530 -7.150H1.530L1.800 0L1.530 7.150H-1.530z"/><path transform="rotate(135)" d="M-1.800 0L-1.530 -7.150H1.530L1.800 0L1.530 7.150H-1.530z"/><circle r="5.400"/></g><circle r="2.500" fill="#fff"/></svg>
<span class="t" style="left:1586.21px;top:578.50px;font-size:16.3px;line-height:22px;color:#333;transform:scaleX(0.9879);">Настройки</span>
<div style="left:151px;top:292.5px;width:6px;height:1px;background:#dcdcdc"></div>
<div style="left:160px;top:292.5px;width:8px;height:1px;background:#b5b5b5"></div>
<div style="left:170px;top:292px;width:9px;height:1.4px;background:#7a7a7a"></div>
<div style="left:181.5px;top:292px;width:4px;height:1.4px;background:#808080"></div>
<div style="left:188.5px;top:291.5px;width:4.5px;height:1.8px;background:#8e8e8e"></div>
<div style="left:182px;top:351px;width:5px;height:1px;background:#777"></div>
<div style="left:109.5px;top:450.5px;width:1.5px;height:1.5px;background:#444"></div>
<div style="left:138px;top:450.5px;width:1.5px;height:1.5px;background:#444"></div>
<div style="left:152px;top:450.5px;width:1.5px;height:1.5px;background:#444"></div>
<div style="left:78px;top:450.5px;width:3px;height:1px;background:#ccc"></div>
<div style="left:146px;top:529.2px;width:2.5px;height:2.5px;background:#6a6a6a"></div>
<div style="left:152px;top:528.6px;width:22px;height:1px;background:#e6e6e6"></div>
<div style="left:117.5px;top:584px;width:1.5px;height:1.5px;background:#b5b5b5"></div>
<div style="left:133.5px;top:584px;width:2px;height:1.5px;background:#9a9a9a"></div>
<div style="left:1404px;top:347px;width:2px;height:1px;background:#aaa"></div>
<div style="left:1620px;top:346.5px;width:1.5px;height:2px;background:#444"></div>
<div style="left:1568px;top:347px;width:6px;height:1px;background:#e4e4e4"></div>
</section>
</main>
</div></body></html>
